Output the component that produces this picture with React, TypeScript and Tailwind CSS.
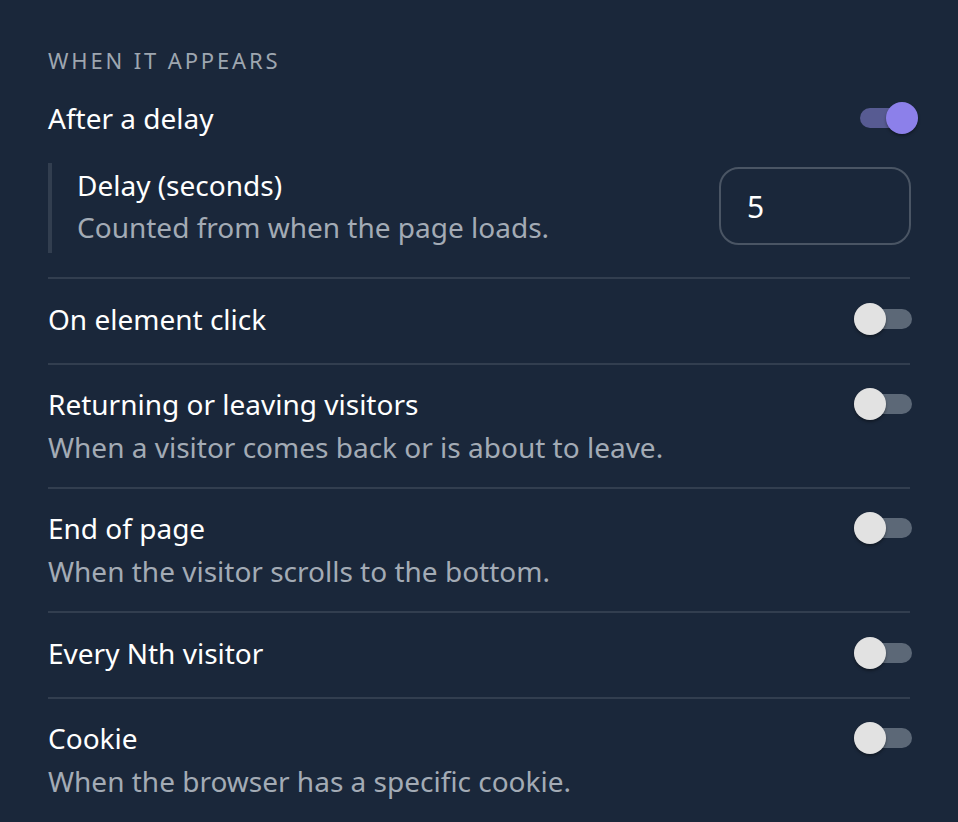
import { useState } from "react";

type Trigger = {
  id: string;
  label: string;
  hint?: string;
  on: boolean;
};

const initial: Trigger[] = [
  { id: "click", label: "On element click", on: false },
  {
    id: "exit",
    label: "Returning or leaving visitors",
    hint: "When a visitor comes back or is about to leave.",
    on: false,
  },
  {
    id: "scroll",
    label: "End of page",
    hint: "When the visitor scrolls to the bottom.",
    on: false,
  },
  { id: "nth", label: "Every Nth visitor", on: false },
  {
    id: "cookie",
    label: "Cookie",
    hint: "When the browser has a specific cookie.",
    on: false,
  },
];

function Toggle({ on, onClick }: { on: boolean; onClick: () => void }) {
  return (
    <button
      type="button"
      role="switch"
      aria-checked={on}
      onClick={onClick}
      className="relative -mr-[2px] h-[32px] w-[58px] shrink-0 cursor-pointer"
    >
      <span
        className={
          on
            ? "absolute top-[6px] left-[6px] h-[20px] w-[52px] rounded-full bg-[#575b92]"
            : "absolute top-[6px] left-0 h-[20px] w-[58px] rounded-full bg-[#5c6877]"
        }
      />
      <span
        className={
          on
            ? "absolute top-0 left-[32px] h-[32px] w-[32px] rounded-full bg-[#8c80ea] shadow-[0_2px_3px_rgba(0,0,0,0.35)]"
            : "absolute top-0 left-0 h-[32px] w-[32px] rounded-full bg-[#e2e2e2] shadow-[0_2px_3px_rgba(0,0,0,0.35)]"
        }
      />
    </button>
  );
}

export default function App() {
  const [delayOn, setDelayOn] = useState(true);
  const [delay, setDelay] = useState("5");
  const [triggers, setTriggers] = useState(initial);

  const flip = (id: string) =>
    setTriggers((list) =>
      list.map((t) => (t.id === id ? { ...t, on: !t.on } : t))
    );

  return (
    <div className="min-h-screen bg-[#1a273a] px-[48px] pt-[46px] font-['Noto_Sans',sans-serif] text-[28px]">
      <h2 className="text-[22px] leading-[28px] tracking-[0.13em] text-[#9ea6b0] uppercase">
        When it appears
      </h2>

      {/* Delay trigger */}
      <div className="mt-[24px] flex items-center justify-between leading-[40px] text-white">
        <span>After a delay</span>
        <Toggle on={delayOn} onClick={() => setDelayOn(!delayOn)} />
      </div>

      <div className="mt-[25px] flex items-center justify-between border-l-4 border-[#323e4f] pt-[1px] pb-[5px] pl-[25px]">
        <div>
          <div className="leading-[42px] text-white">Delay (seconds)</div>
          <div className="leading-[42px] text-[#a3abb5]">
            Counted from when the page loads.
          </div>
        </div>
        <input
          value={delay}
          onChange={(e) => setDelay(e.target.value)}
          className="-mr-[1px] h-[78px] w-[192px] rounded-[20px] border-2 border-[#4a5564] bg-transparent px-[26px] text-[30px] text-white outline-none"
        />
      </div>

      <div className="mt-[24px]">
        {triggers.map((t) => (
          <div
            key={t.id}
            className={
              t.hint
                ? "border-t-2 border-[#323e4f] pt-[18px] pb-[18px]"
                : "border-t-2 border-[#323e4f] pt-[19px] pb-[23px]"
            }
          >
            <div className="flex items-center justify-between leading-[42px] text-white">
              <span>{t.label}</span>
              <Toggle on={t.on} onClick={() => flip(t.id)} />
            </div>
            {t.hint && (
              <div className="leading-[44px] text-[#a3abb5]">{t.hint}</div>
            )}
          </div>
        ))}
      </div>
    </div>
  );
}
